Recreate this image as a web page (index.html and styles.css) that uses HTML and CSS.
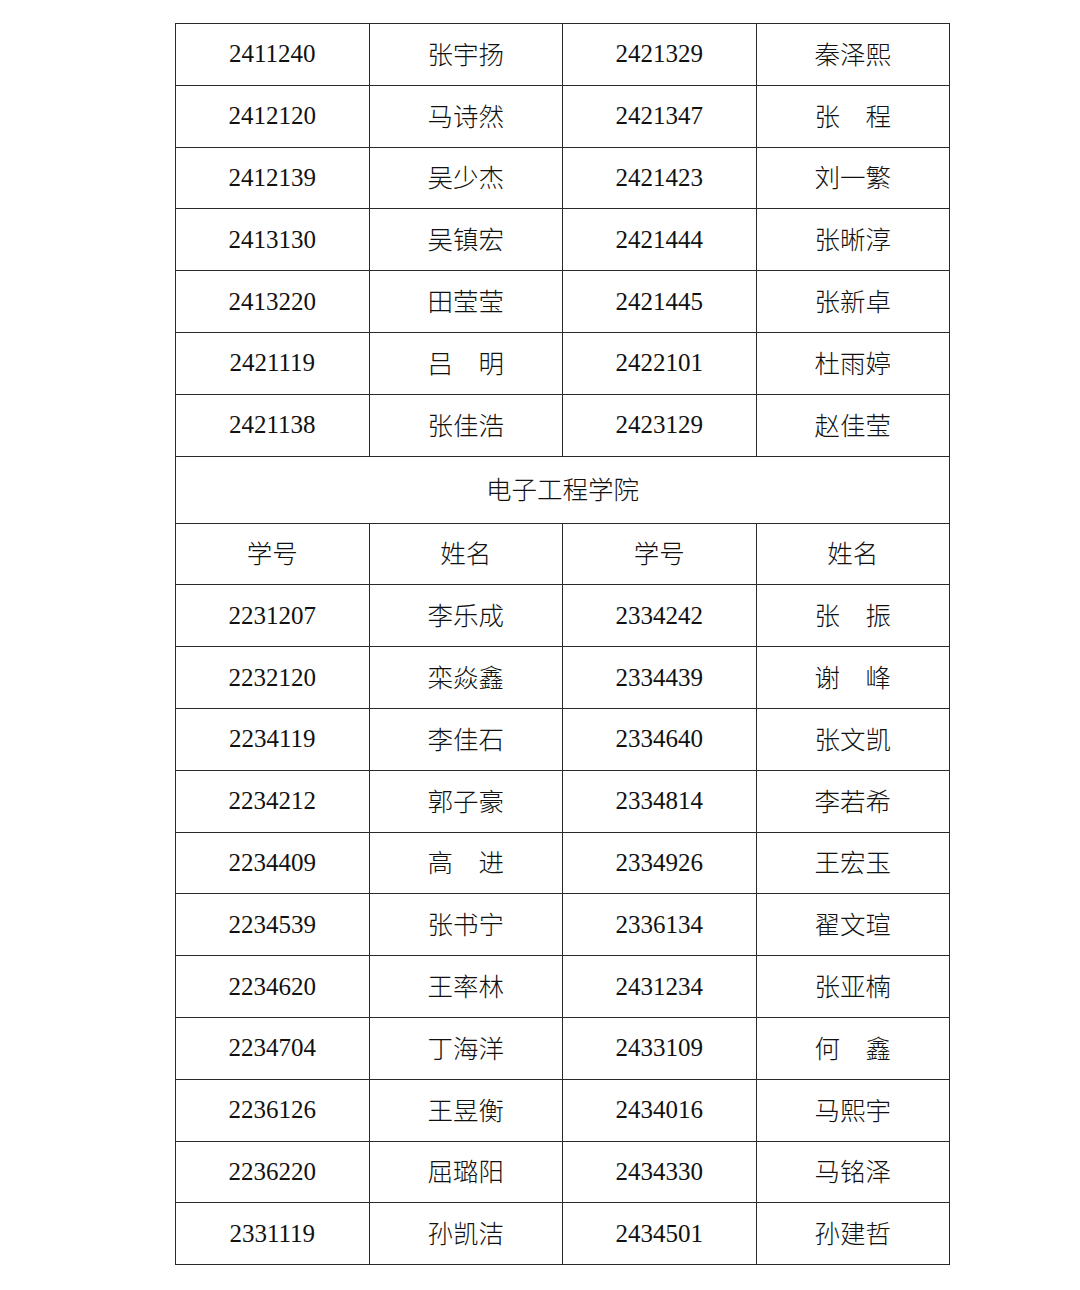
FILE: index.html
```html
<!DOCTYPE html>
<html lang="zh">
<head>
<meta charset="utf-8">
<title>名单</title>
<link rel="stylesheet" href="styles.css">
</head>
<body>
<table class="roster">
<colgroup><col><col><col><col></colgroup>
<tbody>
<tr><td class="id">2411240</td><td class="nm">张宇扬</td><td class="id">2421329</td><td class="nm">秦泽熙</td></tr>
<tr><td class="id">2412120</td><td class="nm">马诗然</td><td class="id">2421347</td><td class="nm">张　程</td></tr>
<tr><td class="id">2412139</td><td class="nm">吴少杰</td><td class="id">2421423</td><td class="nm">刘一繁</td></tr>
<tr><td class="id">2413130</td><td class="nm">吴镇宏</td><td class="id">2421444</td><td class="nm">张晰淳</td></tr>
<tr><td class="id">2413220</td><td class="nm">田莹莹</td><td class="id">2421445</td><td class="nm">张新卓</td></tr>
<tr><td class="id">2421119</td><td class="nm">吕　明</td><td class="id">2422101</td><td class="nm">杜雨婷</td></tr>
<tr><td class="id">2421138</td><td class="nm">张佳浩</td><td class="id">2423129</td><td class="nm">赵佳莹</td></tr>
<tr class="title"><td class="nm" colspan="4">电子工程学院</td></tr>
<tr><td class="nm">学号</td><td class="nm">姓名</td><td class="nm">学号</td><td class="nm">姓名</td></tr>
<tr><td class="id">2231207</td><td class="nm">李乐成</td><td class="id">2334242</td><td class="nm">张　振</td></tr>
<tr><td class="id">2232120</td><td class="nm">栾焱鑫</td><td class="id">2334439</td><td class="nm">谢　峰</td></tr>
<tr><td class="id">2234119</td><td class="nm">李佳石</td><td class="id">2334640</td><td class="nm">张文凯</td></tr>
<tr><td class="id">2234212</td><td class="nm">郭子豪</td><td class="id">2334814</td><td class="nm">李若希</td></tr>
<tr><td class="id">2234409</td><td class="nm">高　进</td><td class="id">2334926</td><td class="nm">王宏玉</td></tr>
<tr><td class="id">2234539</td><td class="nm">张书宁</td><td class="id">2336134</td><td class="nm">翟文瑄</td></tr>
<tr><td class="id">2234620</td><td class="nm">王率林</td><td class="id">2431234</td><td class="nm">张亚楠</td></tr>
<tr><td class="id">2234704</td><td class="nm">丁海洋</td><td class="id">2433109</td><td class="nm">何　鑫</td></tr>
<tr><td class="id">2236126</td><td class="nm">王昱衡</td><td class="id">2434016</td><td class="nm">马熙宇</td></tr>
<tr><td class="id">2236220</td><td class="nm">屈璐阳</td><td class="id">2434330</td><td class="nm">马铭泽</td></tr>
<tr><td class="id">2331119</td><td class="nm">孙凯洁</td><td class="id">2434501</td><td class="nm">孙建哲</td></tr>
</tbody>
</table>
</body>
</html>
```

FILE: styles.css
```css
html, body {
  margin: 0;
  padding: 0;
  background: #ffffff;
}

body {
  padding: 23px 0 0 175px;
  color: #111111;
}

.roster {
  border-collapse: collapse;
  table-layout: fixed;
  width: 775px;
}

.roster col {
  width: 25%;
}

.roster td {
  border: 1px solid #2b2b2b;
  height: 61.8px;
  padding: 0;
  text-align: center;
  vertical-align: middle;
  box-sizing: border-box;
}

.roster .id {
  font-family: "Liberation Serif", "Times New Roman", serif;
  font-size: 25px;
}

.roster .nm {
  font-family: "Noto Sans CJK SC", "Noto Sans CJK JP", sans-serif;
  font-size: 25.5px;
  font-weight: 300;
  padding-bottom: 4px;
}

.roster .title td {
  height: 67px;
}
```
